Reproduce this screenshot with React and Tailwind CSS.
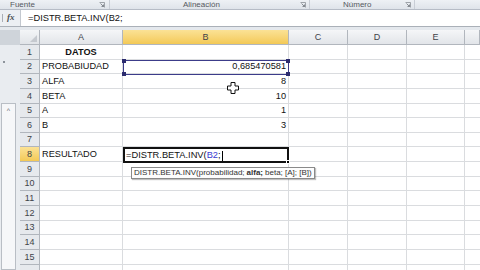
const cols = ['A', 'B', 'C', 'D', 'E', '']

const rows = [
  { a: 'DATOS', b: '', bold: true },
  { a: 'PROBABIUDAD', b: '0,685470581' },
  { a: 'ALFA', b: '8' },
  { a: 'BETA', b: '10' },
  { a: 'A', b: '1' },
  { a: 'B', b: '3' },
  { a: '', b: '' },
  { a: 'RESULTADO', b: '' },
  { a: '', b: '' },
  { a: '', b: '' },
  { a: '', b: '' },
  { a: '', b: '' },
  { a: '', b: '' },
  { a: '', b: '' },
  { a: '', b: '' },
  { a: '', b: '', hideNum: true },
]

function Launcher() {
  return (
    <svg viewBox="0 0 6 6" className="size-[6px]" aria-hidden="true">
      <path d="M0.5 0.5h5v5" fill="none" stroke="#8a8f96" strokeWidth="0.8" />
      <path d="M1.5 1.5l3 3M2.5 4.5h2v-2" fill="none" stroke="#6d7279" strokeWidth="0.8" />
    </svg>
  )
}

function CrossCursor() {
  return (
    <svg viewBox="0 0 12 12" className="size-[12px]" aria-hidden="true">
      <path
        d="M4 0.5h4v3.5h3.5v4h-3.5v3.5h-4v-3.5h-3.5v-4h3.5z"
        fill="#fff"
        stroke="#111"
        strokeWidth="1"
        strokeLinejoin="round"
      />
    </svg>
  )
}

function Handle({ className }) {
  return <span className={`absolute size-[4px] bg-[#2b2b6e] ${className}`} />
}

export default function App() {
  return (
    <div className="flex h-[270px] w-[480px] flex-col overflow-hidden bg-white font-['Liberation_Sans',Arial,sans-serif] text-[9.2px] text-[#111]">
      {/* ribbon group labels */}
      <div className="flex h-[9px] shrink-0 items-end bg-gradient-to-b from-[#eef1f5] to-[#dfe4ea] text-[8px] leading-[8px] text-[#55595f]">
        <div className="flex h-full w-[110px] items-center justify-between border-r border-[#c9ced6] pr-[4px] pl-[10px]">
          <span>Fuente</span>
          <Launcher />
        </div>
        <div className="flex h-full w-[200px] items-center justify-between border-r border-[#c9ced6] pr-[3px] pl-[73px]">
          <span>Alineación</span>
          <Launcher />
        </div>
        <div className="flex h-full w-[105px] items-center justify-between border-r border-[#c9ced6] pr-[3px] pl-[33px]">
          <span>Número</span>
          <Launcher />
        </div>
        <div className="h-full flex-1" />
      </div>

      {/* formula bar */}
      <div className="flex h-[17px] shrink-0 border-t border-[#b6bcc6]">
        <div className="flex w-[20px] items-center gap-[4px] bg-[#eceff3] pl-[2px]">
          <span className="h-[8px] w-px bg-[#a9aeb5]" />
          <span className="font-['Liberation_Serif',serif] text-[9px] font-bold italic text-[#4a4f56]">fx</span>
        </div>
        <div className="flex flex-1 items-center border-l border-[#c3c8cf] pt-[1px] pl-[7px] text-[9.3px]">
          =DISTR.BETA.INV(B2;
        </div>
      </div>
      <div className="h-[4px] shrink-0 border-t border-[#aab0b8] bg-[#e4e8ed]" />

      <div className="flex min-h-0 flex-1 overflow-hidden">
        {/* left pane */}
        <div className="flex w-[20px] shrink-0 flex-col bg-[#e9ecf0]">
          <div className="h-[15px] shrink-0 bg-[#cfd4da]" />
          <div className="flex h-[58px] shrink-0 items-start pt-[16px] pl-[3px]">
            <span className="size-[1.5px] bg-[#8d939b]" />
          </div>
          <div className="ml-[1px] flex w-[15px] flex-1 flex-col items-center border border-[#b9bec5] bg-[#f6f7f9] pt-[2px] text-[7px] text-[#5d6269]">
            ^
          </div>
        </div>

        {/* sheet grid */}
        <div className="relative flex-1">
          <div className="grid grid-cols-[20px_83px_166px_59px_59px_58px_15px] grid-rows-[15px_repeat(16,14.65px)] leading-[10px]">
            <div className="relative border-r border-b border-[#b1b6bd] bg-gradient-to-b from-[#f3f5f7] to-[#e1e4e8]">
              <svg viewBox="0 0 8 8" className="absolute right-[2px] bottom-[2px] size-[7px]" aria-hidden="true">
                <path d="M8 0v8h-8z" fill="#c5c9cf" />
              </svg>
            </div>
            {cols.map((c, i) => (
              <div
                key={`h${i}`}
                className={`flex items-end justify-center border-r border-b border-[#b1b6bd] pb-[2px] text-[9px] text-[#3e4349] ${
                  c === 'B'
                    ? 'bg-gradient-to-b from-[#fbe295] to-[#f3c955]'
                    : 'bg-gradient-to-b from-[#f5f6f8] to-[#e2e5e9]'
                }`}
              >
                {c}
              </div>
            ))}

            {rows.map((r, i) => (
              <Row key={i} n={i + 1} row={r} />
            ))}
          </div>

          {/* referenced cell B2 */}
          <div className="absolute top-[29.5px] left-[103px] h-[15px] w-[166px] border border-[#3c3c8a]">
            <Handle className="-top-[2px] -left-[2px]" />
            <Handle className="-top-[2px] -right-[2px]" />
            <Handle className="-bottom-[2px] -left-[2px]" />
            <Handle className="-right-[2px] -bottom-[2px]" />
          </div>

          {/* edited cell B8 */}
          <div className="absolute top-[117px] left-[103px] flex h-[16px] w-[166px] items-center border-2 border-[#111] bg-white pt-[1px] pl-[1px] text-[9.3px]">
            <span>=DISTR.BETA.INV(</span>
            <span className="text-[#3b3bd1]">B2</span>
            <span>;</span>
            <span className="ml-px h-[10px] w-px bg-black" />
            <span className="absolute -right-[3px] -bottom-[3px] size-[4px] border border-white bg-black" />
          </div>

          {/* function tooltip */}
          <div className="absolute top-[137px] left-[111px] flex h-[12px] items-center border border-[#8a8a8a] bg-[#fdfdfd] px-[2px] text-[8px] whitespace-nowrap text-[#333] shadow-[1px_1px_1px_rgba(0,0,0,0.25)]">
            DISTR.BETA.INV(probabilidad; <b className="mx-[2px]">alfa;</b> beta; [A]; [B])
          </div>

          {/* mouse pointer */}
          <div className="absolute top-[52px] left-[207px]">
            <CrossCursor />
          </div>
        </div>
      </div>
    </div>
  )
}

function Row({ n, row }) {
  const active = n === 8
  return (
    <>
      <div
        className={`flex items-end justify-center border-r border-b border-[#b1b6bd] pb-[2px] text-[9px] text-[#3e4349] ${
          active ? 'bg-gradient-to-b from-[#fbe295] to-[#f3c955]' : 'bg-[#e6e9ed]'
        }`}
      >
        {row.hideNum ? '' : n}
      </div>
      <div
        className={`flex items-end overflow-hidden border-r border-b border-[#dadcdf] pb-[2px] whitespace-nowrap ${
          row.bold ? 'justify-center font-bold' : 'pl-[2px]'
        }`}
      >
        {row.a}
      </div>
      <div className="flex items-end justify-end border-r border-b border-[#dadcdf] pr-[2px] pb-[2px]">
        {row.b}
      </div>
      <div className="border-r border-b border-[#dadcdf]" />
      <div className="border-r border-b border-[#dadcdf]" />
      <div className="border-r border-b border-[#dadcdf]" />
      <div className="border-b border-[#dadcdf]" />
    </>
  )
}
